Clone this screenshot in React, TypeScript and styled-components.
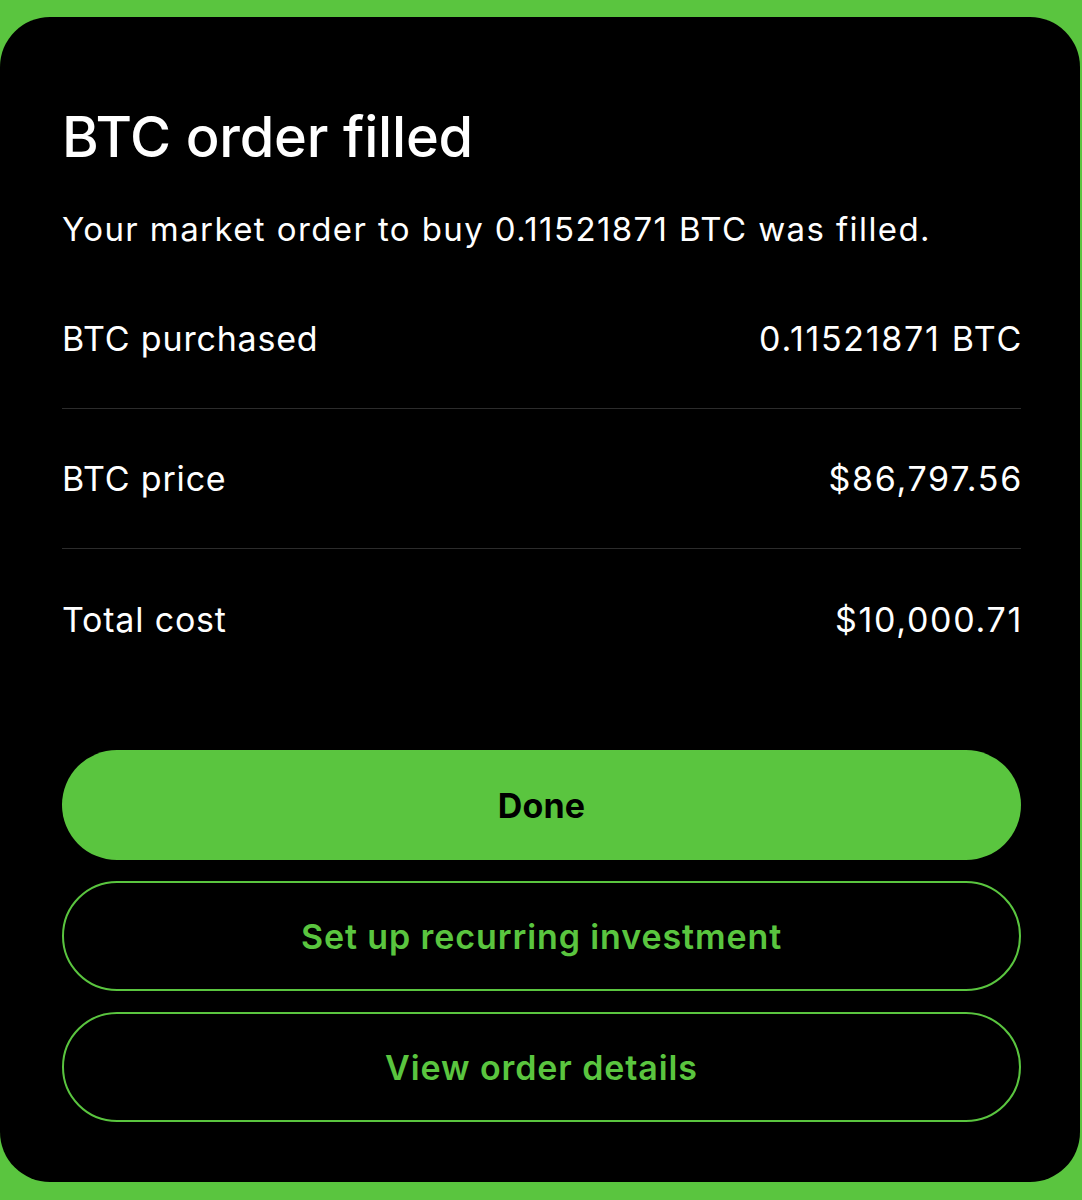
import React from 'react';
import styled, { createGlobalStyle } from 'styled-components';

const GREEN = '#5ac53f';

const GlobalStyle = createGlobalStyle`
    html, body {
        margin: 0;
        padding: 0;
        background: ${GREEN};
        font-family: Inter, "Noto Sans", sans-serif;
    }
`;

const Page = styled.div`
    width: 1082px;
    height: 1200px;
    padding-top: 17px;
    box-sizing: border-box;
`;

const Card = styled.div`
    width: 1080px;
    height: 1165px;
    background: #000;
    border-radius: 50px;
    box-sizing: border-box;
    padding: 86px 59px 0 62px;
    display: flex;
    flex-direction: column;
    color: #fff;
`;

const Title = styled.h1`
    margin: 0;
    font-size: 56px;
    line-height: 68px;
    font-weight: 500;
    letter-spacing: -0.2px;
`;

const Subtitle = styled.p`
    margin: 38px 0 0;
    font-size: 33px;
    line-height: 40px;
    font-weight: 400;
    letter-spacing: 1.4px;
`;

const Rows = styled.div`
    margin-top: 20px;
    display: flex;
    flex-direction: column;
`;

const Row = styled.div<{ $last?: boolean }>`
    height: 140px;
    display: flex;
    align-items: center;
    justify-content: space-between;
    font-size: 34px;
    border-bottom: ${p => (p.$last ? 'none' : '1px solid #2c2c2c')};
    box-sizing: border-box;
`;

const Label = styled.span`
    letter-spacing: 0.8px;
`;

const Value = styled.span`
    letter-spacing: 1.7px;
    margin-right: -2px;
`;

const Buttons = styled.div`
    margin-top: 61px;
    display: flex;
    flex-direction: column;
    gap: 21px;
`;

const Button = styled.button<{ $primary?: boolean }>`
    height: 110px;
    width: 100%;
    border-radius: 55px;
    font-family: Inter, "Noto Sans", sans-serif;
    font-size: 34px;
    font-weight: ${p => (p.$primary ? 700 : 600)};
    letter-spacing: ${p => (p.$primary ? '0.2px' : '0.9px')};
    background: ${p => (p.$primary ? GREEN : '#000')};
    color: ${p => (p.$primary ? '#000' : GREEN)};
    border: ${p => (p.$primary ? 'none' : `2px solid ${GREEN}`)};
    cursor: pointer;
`;

const rows = [
    { label: 'BTC purchased', value: '0.11521871 BTC' },
    { label: 'BTC price', value: '$86,797.56' },
    { label: 'Total cost', value: '$10,000.71' },
];

export default function App() {
    return (
        <Page>
            <GlobalStyle />
            <Card>
                <Title>BTC order filled</Title>
                <Subtitle>Your market order to buy 0.11521871 BTC was filled.</Subtitle>
                <Rows>
                    {rows.map((r, i) => (
                        <Row key={r.label} $last={i === rows.length - 1}>
                            <Label>{r.label}</Label>
                            <Value>{r.value}</Value>
                        </Row>
                    ))}
                </Rows>
                <Buttons>
                    <Button $primary>Done</Button>
                    <Button>Set up recurring investment</Button>
                    <Button>View order details</Button>
                </Buttons>
            </Card>
        </Page>
    );
}
